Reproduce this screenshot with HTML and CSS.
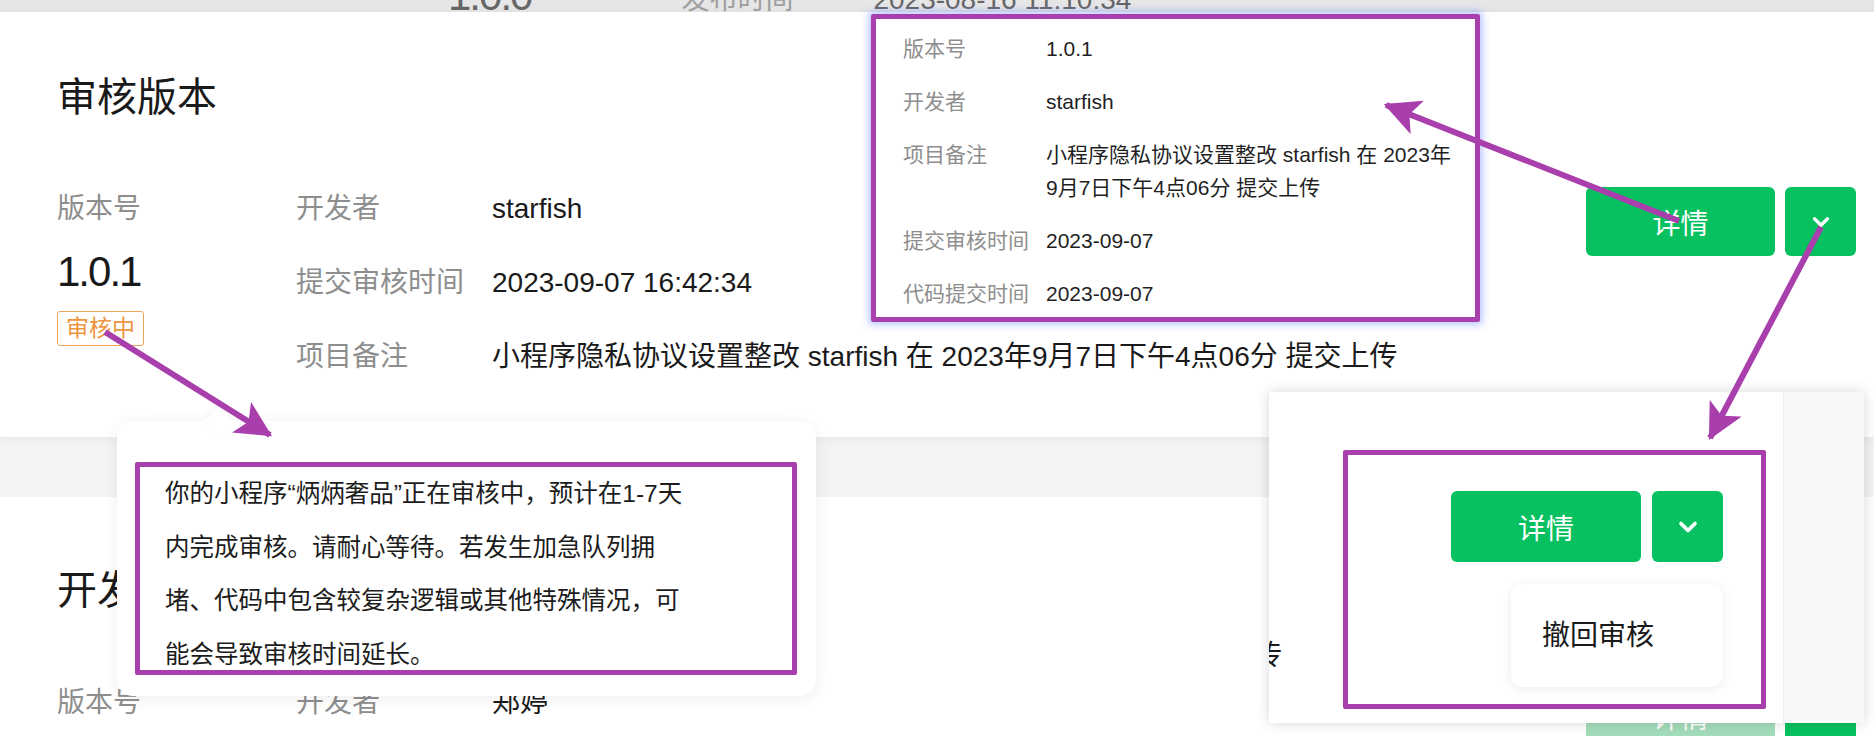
FILE: index.html
```html
<!DOCTYPE html>
<html lang="zh-CN">
<head>
<meta charset="utf-8">
<title>审核版本</title>
<link rel="stylesheet" href="styles.css">
</head>
<body>
<div class="page">
  <div class="topbar">
    <span class="tb-ver">1.0.0</span>
    <span class="tb-label">发布时间</span>
    <span class="tb-val">2023-08-16 11:10:34</span>
  </div>

  <section class="card main">
    <h2 class="title">审核版本</h2>
    <div class="body">
      <div class="vercol">
        <div class="label">版本号</div>
        <div class="ver">1.0.1</div>
        <span class="badge">审核中</span>
      </div>
      <dl class="fields">
        <dt>开发者</dt><dd>starfish</dd>
        <dt>提交审核时间</dt><dd>2023-09-07 16:42:34</dd>
        <dt>项目备注</dt><dd>小程序隐私协议设置整改 starfish 在 2023年9月7日下午4点06分 提交上传</dd>
      </dl>
      <div class="actions">
        <button class="btn primary">详情</button>
        <button class="btn more"><svg viewBox="0 0 24 24" width="26" height="26"><path d="M6 9l6 6 6-6" fill="none" stroke="#fff" stroke-width="3" stroke-linecap="round" stroke-linejoin="round"/></svg></button>
      </div>
    </div>
  </section>

  <section class="card second">
    <h2 class="title">开发版本</h2>
    <div class="body">
      <div class="vercol">
        <div class="label">版本号</div>
      </div>
      <dl class="fields">
        <dt>开发者</dt><dd>郑婷</dd>
      </dl>
      <div class="actions">
        <button class="btn primary faded">详情</button>
        <button class="btn more"></button>
      </div>
    </div>
  </section>

  <div class="popover">
    <dl class="pop-list">
      <dt>版本号</dt><dd>1.0.1</dd>
      <dt>开发者</dt><dd>starfish</dd>
      <dt>项目备注</dt><dd>小程序隐私协议设置整改 starfish 在 2023年<br>9月7日下午4点06分 提交上传</dd>
      <dt>提交审核时间</dt><dd>2023-09-07</dd>
      <dt>代码提交时间</dt><dd>2023-09-07</dd>
    </dl>
  </div>

  <div class="tooltip">
    <div class="tip-frame">
      <p class="tip-text">你的小程序“炳炳奢品”正在审核中，预计在1-7天<br>内完成审核。请耐心等待。若发生加急队列拥<br>堵、代码中包含较复杂逻辑或其他特殊情况，可<br>能会导致审核时间延长。</p>
    </div>
  </div>

  <div class="dpanel">
    <div class="cut"><span>传</span></div>
    <div class="dp-frame">
      <div class="dp-actions">
        <button class="btn primary">详情</button>
        <button class="btn more"><svg viewBox="0 0 24 24" width="28" height="28"><path d="M6 9l6 6 6-6" fill="none" stroke="#fff" stroke-width="3.2" stroke-linecap="round" stroke-linejoin="round"/></svg></button>
      </div>
      <div class="menu">撤回审核</div>
    </div>
    <div class="dp-strip"></div>
  </div>

  <svg class="arrows" width="1874" height="736" viewBox="0 0 1874 736">
    <defs>
      <marker id="ah" markerWidth="6" markerHeight="6" refX="5.6" refY="3" orient="auto" markerUnits="strokeWidth">
        <path d="M0,0 L6,3 L0,6 L1.4,3 z" fill="#a93ead"/>
      </marker>
    </defs>
    <line x1="105" y1="332" x2="270" y2="435" stroke="#a93ead" stroke-width="6" marker-end="url(#ah)"/>
    <line x1="1679" y1="221" x2="1386" y2="105" stroke="#a93ead" stroke-width="6" marker-end="url(#ah)"/>
    <line x1="1821" y1="227" x2="1710" y2="438" stroke="#a93ead" stroke-width="6" marker-end="url(#ah)"/>
  </svg>
</div>
</body>
</html>
```

FILE: styles.css
```css
* { box-sizing: border-box; }
html, body { margin: 0; padding: 0; }
body {
  font-family: "Liberation Sans", "Noto Sans CJK SC", sans-serif;
  background: #f3f3f3;
  color: #1c1c1c;
}
.page {
  position: relative;
  width: 1874px;
  height: 736px;
  overflow: hidden;
  background: #f3f3f3;
}

/* top strip (previous card, cut off) */
.topbar {
  height: 12px;
  background: #e6e6e6;
  display: flex;
  align-items: flex-end;
  overflow: hidden;
  padding-left: 448px;
}
.topbar span { line-height: 1; white-space: nowrap; }
.tb-ver { font-size: 42px; color: #666; letter-spacing: -2px; margin-bottom: -5px; }
.tb-label { font-size: 28px; color: #a0a0a0; margin-left: 150px; margin-bottom: -2px; }
.tb-val { font-size: 28px; color: #666; margin-left: 80px; margin-bottom: -2px; }

/* cards */
.card { background: #fff; }
.main {
  position: relative;
  height: 425px;
  padding: 61px 18px 0 57px;
  box-shadow: 0 2px 10px rgba(0, 0, 0, 0.05);
}
.second {
  margin-top: 60px;
  height: 300px;
  padding: 69px 18px 0 57px;
}
.title {
  margin: 0;
  font-size: 40px;
  font-weight: 400;
  line-height: 48px;
  color: #1a1a1a;
}
.body {
  display: flex;
  align-items: flex-start;
  margin-top: 67px;
}
.second .body { margin-top: 68px; }
.vercol {
  width: 239px;
  flex: none;
  display: flex;
  flex-direction: column;
  align-items: flex-start;
}
.label {
  font-size: 28px;
  line-height: 42px;
  color: #8e8e8e;
}
.ver {
  font-size: 42px;
  line-height: 50px;
  margin-top: 17px;
  letter-spacing: -2px;
  color: #1a1a1a;
}
.badge {
  margin-top: 14px;
  height: 35px;
  padding: 0 8px;
  border: 1px solid #efa45c;
  border-radius: 3px;
  color: #ee9440;
  font-size: 23px;
  line-height: 33px;
}
.fields {
  margin: 0;
  display: grid;
  grid-template-columns: 196px auto;
  row-gap: 32px;
  font-size: 28px;
  line-height: 42px;
}
.fields dt { color: #8e8e8e; }
.fields dd { margin: 0; color: #1a1a1a; white-space: nowrap; }

.actions {
  margin-left: auto;
  margin-top: -1px;
  display: flex;
  gap: 10px;
}
.btn {
  border: 0;
  border-radius: 6px;
  background: #07c160;
  color: #fff;
  font-family: inherit;
  font-size: 28px;
  height: 69px;
  padding: 0;
  display: flex;
  align-items: center;
  justify-content: center;
}
.btn.primary { width: 189px; }
.btn.more { width: 71px; }
.btn.more svg { display: block; }
.btn.faded { background: #a3dcba; }

/* popover (top) */
.popover {
  position: absolute;
  left: 871px;
  top: 14px;
  width: 609px;
  height: 308px;
  background: #fff;
  border: 5px solid #a93ead;
  border-radius: 2px;
  box-shadow: 0 0 7px 3px rgba(110, 140, 255, 0.45);
  padding: 13px 0 0 27px;
}
.pop-list {
  margin: 0;
  display: grid;
  grid-template-columns: 143px auto;
  row-gap: 20px;
  font-size: 21px;
  line-height: 33px;
}
.pop-list dt { color: #8e8e8e; }
.pop-list dd { margin: 0; color: #1f1f1f; white-space: nowrap; }

/* tooltip (left) */
.tooltip {
  position: absolute;
  left: 117px;
  top: 421px;
  width: 699px;
  height: 275px;
  background: #fff;
  border-radius: 16px;
  box-shadow: 0 3px 16px rgba(0, 0, 0, 0.07);
  padding: 41px 19px 21px 18px;
}
.tooltip::before {
  content: "";
  position: absolute;
  left: 91px;
  top: -10px;
  width: 22px;
  height: 22px;
  background: #fff;
  transform: rotate(45deg);
  box-shadow: -3px -3px 6px rgba(0, 0, 0, 0.03);
}
.tip-frame {
  position: relative;
  height: 100%;
  border: 5px solid #a93ead;
  border-radius: 2px;
  padding: 0 0 0 25px;
}
.tip-text {
  margin: 0;
  font-size: 24.5px;
  line-height: 53.5px;
  color: #1c1c1c;
  white-space: nowrap;
}

/* dropdown crop panel (right) */
.dpanel {
  position: absolute;
  left: 1269px;
  top: 392px;
  width: 595px;
  height: 331px;
  background: #fff;
  box-shadow: 0 0 12px rgba(0, 0, 0, 0.16);
  display: flex;
  align-items: flex-start;
  overflow: hidden;
}
.cut {
  width: 74px;
  flex: none;
  padding-top: 243px;
  font-size: 28px;
  line-height: 42px;
  color: #1a1a1a;
}
.cut span { display: block; margin-left: -15px; }
.dp-frame {
  width: 423px;
  height: 259px;
  flex: none;
  margin-top: 58px;
  border: 5px solid #a93ead;
  border-radius: 2px;
  padding: 36px 38px 0 0;
  display: flex;
  flex-direction: column;
  align-items: flex-end;
}
.dp-actions { display: flex; gap: 11px; }
.dp-actions .btn { height: 71px; }
.dp-actions .btn.primary { width: 190px; }
.menu {
  margin-top: 22px;
  width: 212px;
  height: 103px;
  background: #fff;
  border-radius: 12px;
  box-shadow: 0 2px 12px rgba(0, 0, 0, 0.08);
  font-size: 28px;
  line-height: 103px;
  padding-left: 31px;
  color: #1a1a1a;
}
.dp-strip {
  margin-left: auto;
  width: 81px;
  height: 100%;
  background: #f8f8f8;
  border-left: 1px solid #ededed;
}

.arrows {
  position: absolute;
  left: 0;
  top: 0;
  pointer-events: none;
}
```
